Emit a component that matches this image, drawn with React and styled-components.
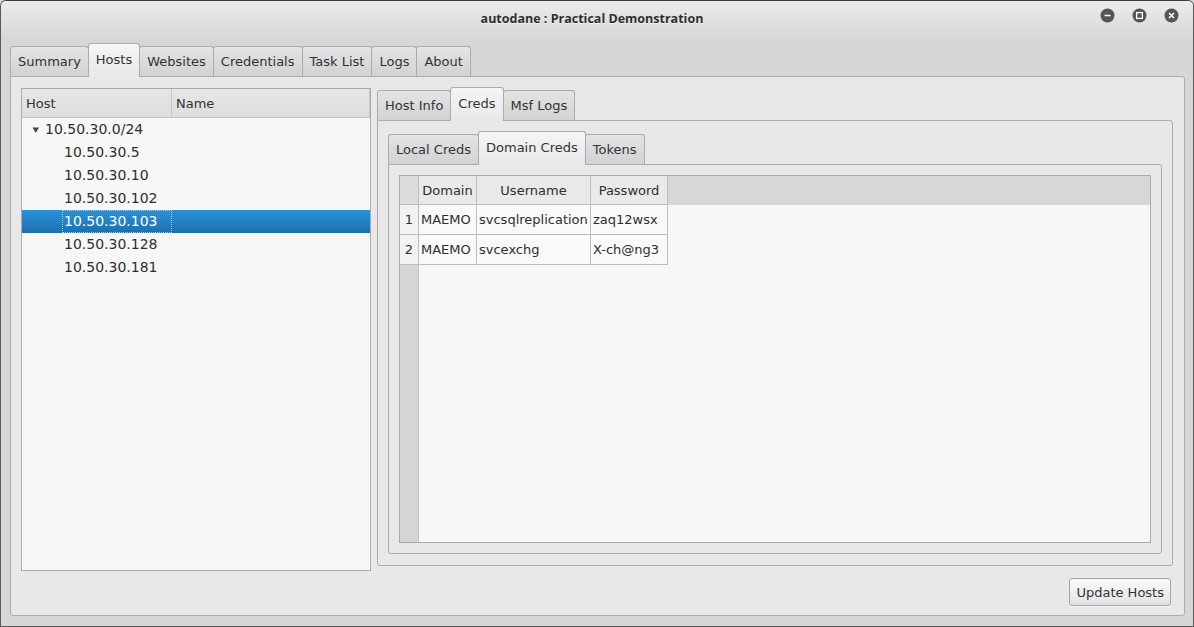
import React from "react";
import styled, { createGlobalStyle } from "styled-components";

const GlobalStyle = createGlobalStyle`
  html, body {
    margin: 0;
    padding: 0;
    background: #d6d6d6;
  }
  body {
    font-family: "DejaVu Sans", "Liberation Sans", sans-serif;
    font-size: 13px;
    color: #2e3436;
  }
  * {
    box-sizing: border-box;
  }
`;

const hosts = [
  "10.50.30.5",
  "10.50.30.10",
  "10.50.30.102",
  "10.50.30.103",
  "10.50.30.128",
  "10.50.30.181",
];

const creds = [
  { domain: "MAEMO", user: "svcsqlreplication", pass: "zaq12wsx" },
  { domain: "MAEMO", user: "svcexchg", pass: "X-ch@ng3" },
];

const WindowControls = () => (
  <Controls>
    <svg width="15" height="15" viewBox="0 0 15 15">
      <circle cx="7.5" cy="7.5" r="7" fill="#555" />
      <line x1="4.5" y1="7.5" x2="10.5" y2="7.5" stroke="#fff" strokeWidth="1.6" />
    </svg>
    <svg width="15" height="15" viewBox="0 0 15 15">
      <circle cx="7.5" cy="7.5" r="7" fill="#555" />
      <rect x="4.6" y="4.6" width="5.8" height="5.8" fill="none" stroke="#fff" strokeWidth="1.3" />
    </svg>
    <svg width="15" height="15" viewBox="0 0 15 15">
      <circle cx="7.5" cy="7.5" r="7" fill="#555" />
      <path d="M5 5 L10 10 M10 5 L5 10" stroke="#fff" strokeWidth="1.5" />
    </svg>
  </Controls>
);

const TabWidget = ({ tabs, active, children, className }) => (
  <Widget className={className}>
    <TabBar>
      {tabs.map((t, i) => (
        <Tab key={t} $active={i === active} $first={i === 0}>
          {t}
        </Tab>
      ))}
    </TabBar>
    {children}
  </Widget>
);

const App = () => {
  return (
    <>
      <GlobalStyle />
      <Window>
        <TitleBar>
          <span />
          <Title>autodane : Practical Demonstration</Title>
          <WindowControls />
        </TitleBar>
        <Body>
          <TabWidget
            tabs={["Summary", "Hosts", "Websites", "Credentials", "Task List", "Logs", "About"]}
            active={1}
          >
            <MainPane>
              <ContentRow>
                <Tree>
                  <TreeHeader>
                    <HeaderSection $width="150px">Host</HeaderSection>
                    <HeaderSection>Name</HeaderSection>
                  </TreeHeader>
                  <TreeRow>
                    <Arrow width="8" height="8" viewBox="0 0 8 8">
                      <polygon points="0.5,1.5 7,1.5 3.75,7" fill="#444" />
                    </Arrow>
                    <RowText>10.50.30.0/24</RowText>
                  </TreeRow>
                  {hosts.map((h) => (
                    <TreeRow key={h} $selected={h === "10.50.30.103"} $child>
                      <RowText $focus={h === "10.50.30.103"}>{h}</RowText>
                    </TreeRow>
                  ))}
                </Tree>
                <RightTabs tabs={["Host Info", "Creds", "Msf Logs"]} active={1}>
                  <InnerPane>
                    <TabWidget tabs={["Local Creds", "Domain Creds", "Tokens"]} active={1}>
                      <TablePane>
                        <Table>
                          <Corner />
                          <HeadCell>Domain</HeadCell>
                          <HeadCell>Username</HeadCell>
                          <HeadCell>Password</HeadCell>
                          <HeadFill />
                          {creds.map((c, i) => (
                            <React.Fragment key={c.user}>
                              <RowNum>{i + 1}</RowNum>
                              <Cell>{c.domain}</Cell>
                              <Cell>{c.user}</Cell>
                              <Cell>{c.pass}</Cell>
                              <Empty />
                            </React.Fragment>
                          ))}
                          <SideFill />
                          <BodyFill />
                        </Table>
                      </TablePane>
                    </TabWidget>
                  </InnerPane>
                </RightTabs>
              </ContentRow>
              <ButtonRow>
                <Button>Update Hosts</Button>
              </ButtonRow>
            </MainPane>
          </TabWidget>
        </Body>
      </Window>
    </>
  );
};

const Window = styled.div`
  width: 1194px;
  height: 627px;
  border: 1px solid #5a5a5a;
  border-top-color: #3e3e3e;
  border-radius: 6px 6px 0 0;
  background: #d6d6d6;
  display: flex;
  flex-direction: column;
  overflow: hidden;
`;

const TitleBar = styled.div`
  height: 37px;
  flex: none;
  display: grid;
  grid-template-columns: 1fr auto 1fr;
  align-items: center;
  padding: 0 14px 3px 0;
  background: linear-gradient(#ebebeb, #d8d8d8);
`;

const Title = styled.div`
  font-family: "Open Sans", "DejaVu Sans", sans-serif;
  font-weight: 700;
  font-size: 12.5px;
  color: #2e2e2e;
  text-shadow: 0 1px 0 rgba(255, 255, 255, 0.6);
  padding-left: 4px;
`;

const Controls = styled.div`
  justify-self: end;
  display: flex;
  gap: 17px;
  padding-bottom: 5px;
`;

const Body = styled.div`
  flex: 1;
  display: flex;
  flex-direction: column;
  padding: 5px 8px 10px 9px;
`;

const Widget = styled.div`
  flex: 1;
  display: flex;
  flex-direction: column;
  min-width: 0;
`;

const TabBar = styled.div`
  height: 33px;
  flex: none;
  display: flex;
  align-items: flex-end;
`;

const Tab = styled.div`
  height: ${(p) => (p.$active ? 34 : 30)}px;
  margin-bottom: ${(p) => (p.$active ? -1 : 0)}px;
  margin-left: ${(p) => (p.$first ? 0 : -1)}px;
  padding: 0 7px ${(p) => (p.$active ? 3 : 0)}px;
  border: 1px solid #ababab;
  border-bottom: none;
  border-radius: 3px 3px 0 0;
  background: ${(p) =>
    p.$active
      ? "linear-gradient(#f5f5f5, #e8e8e8)"
      : "linear-gradient(#e4e4e4, #d2d2d2)"};
  display: flex;
  align-items: center;
  white-space: nowrap;
  color: #2e3436;
  position: relative;
  z-index: ${(p) => (p.$active ? 2 : 1)};
`;

const Pane = styled.div`
  flex: 1;
  border: 1px solid #ababab;
  border-radius: 0 3px 3px 3px;
  background: #e8e8e8;
  display: flex;
  flex-direction: column;
  min-height: 0;
`;

const MainPane = styled(Pane)`
  padding: 11px 11px 9px 10px;
`;

const ContentRow = styled.div`
  flex: 1;
  display: flex;
  gap: 6px;
  min-height: 0;
`;

const Tree = styled.div`
  width: 350px;
  flex: none;
  border: 1px solid #aaaaaa;
  background: #f7f7f7;
  display: flex;
  flex-direction: column;
`;

const TreeHeader = styled.div`
  height: 29px;
  flex: none;
  display: flex;
  border-bottom: 1px solid #c4c4c4;
  background: linear-gradient(#e6e6e6, #dedede);
`;

const HeaderSection = styled.div`
  width: ${(p) => p.$width || "auto"};
  flex: ${(p) => (p.$width ? "none" : "1")};
  display: flex;
  align-items: center;
  padding: 1px 0 0 4px;
  border-right: 1px solid #c6c6c6;
  color: #2e3436;
`;

const TreeRow = styled.div`
  height: 23px;
  flex: none;
  display: flex;
  align-items: center;
  padding-left: ${(p) => (p.$child ? 43 : 10)}px;
  background: ${(p) =>
    p.$selected ? "linear-gradient(#2a92da, #1e70ad)" : "transparent"};
  color: ${(p) => (p.$selected ? "#ffffff" : "#2e2e2e")};
`;

const Arrow = styled.svg`
  margin-right: 6px;
  flex: none;
`;

const RowText = styled.span`
  font-size: 14px;
  height: 23px;
  line-height: 23px;
  padding: 0 14px 0 2px;
  margin-left: -3px;
  outline: ${(p) => (p.$focus ? "1px dotted rgba(200, 220, 235, 0.8)" : "none")};
  outline-offset: -1px;
`;

const RightTabs = styled(TabWidget)`
  margin-top: -1px;
  margin-bottom: 5px;
`;

const InnerPane = styled(Pane)`
  padding: 10px 10px 11px 10px;
`;

const TablePane = styled(Pane)`
  padding: 10px;
`;

const Table = styled.div`
  flex: 1;
  border: 1px solid #aaaaaa;
  background: #f7f7f7;
  display: grid;
  grid-template-columns: 19px 58px 114px 77px 1fr;
  grid-template-rows: 29px 30px 30px 1fr;
`;

const GridCell = styled.div`
  border-right: 1px solid #bdbdbd;
  border-bottom: 1px solid #bdbdbd;
  display: flex;
  align-items: center;
  white-space: nowrap;
  color: #2e2e2e;
`;

const Corner = styled(GridCell)`
  background: #dcdcdc;
`;

const HeadCell = styled(GridCell)`
  background: #e9e9e9;
  justify-content: center;
`;

const HeadFill = styled.div`
  background: #d7d7d7;
`;

const RowNum = styled(GridCell)`
  background: #f2f2f2;
  justify-content: center;
`;

const Cell = styled(GridCell)`
  background: #f9f9f9;
  padding-left: 2px;
`;

const Empty = styled.div``;

const SideFill = styled.div`
  background: #d5d5d5;
  border-right: 1px solid #c4c4c4;
`;

const BodyFill = styled.div`
  grid-column: span 4;
`;

const ButtonRow = styled.div`
  flex: none;
  display: flex;
  justify-content: flex-end;
  margin-top: 7px;
  padding-right: 2px;
`;

const Button = styled.button`
  height: 28px;
  padding: 0 6px;
  font-family: "DejaVu Sans", "Liberation Sans", sans-serif;
  font-size: 13px;
  color: #2e3436;
  border: 1px solid #a4a4a4;
  border-radius: 3px;
  background: linear-gradient(#fbfbfb, #e2e2e2);
  box-shadow: 0 1px 0 rgba(255, 255, 255, 0.7);
`;

export default App;
